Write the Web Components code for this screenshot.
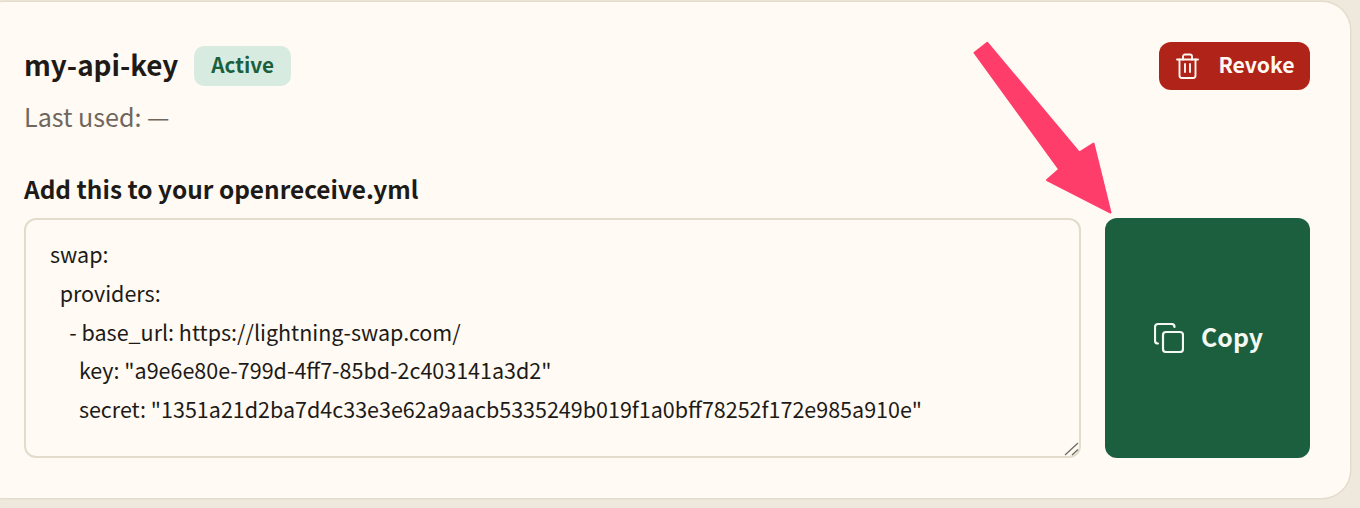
<!DOCTYPE html>
<html lang="en">
<head>
<meta charset="utf-8">
<title>API key</title>
<style>
  html, body { margin: 0; height: 100%; overflow: hidden; }
  body { background: #eee8dd; font-family: "Noto Sans CJK JP", "Noto Sans", sans-serif; }
</style>
</head>
<body>
<key-card>
  <span slot="name">my-api-key</span>
  <status-badge slot="badge">Active</status-badge>
  <span slot="meta">Last used: —</span>
  <action-button slot="revoke" kind="danger" icon="trash">Revoke</action-button>
  <span slot="label">Add this to your openreceive.yml</span>
  <config-box slot="config"></config-box>
  <action-button slot="copy" kind="primary" icon="copy">Copy</action-button>
</key-card>
<pointer-arrow></pointer-arrow>

<script>
class StatusBadge extends HTMLElement {
    connectedCallback() {
        this.attachShadow({ mode: 'open' });
        this.shadowRoot.innerHTML = `
            <style>
                :host {
                    display: inline-flex;
                    align-items: center;
                    height: 40px;
                    padding: 0 17px 4px;
                    box-sizing: border-box;
                    border-radius: 10px;
                    background: #d8ebe0;
                    color: #1c5f3e;
                    font-size: 20.7px;
                    font-weight: 700;
                }
            </style>
            <slot></slot>
        `;
    }
}
customElements.define('status-badge', StatusBadge);

const ICONS = {
    trash: `<svg width="23" height="26" viewBox="0 0 23 26" fill="none" stroke="currentColor" stroke-width="1.900" stroke-linecap="round" stroke-linejoin="round">
        <path d="M1 6.500h21"/><path d="M7 6.500V3.500a2 2 0 0 1 2-2h5a2 2 0 0 1 2 2v3"/>
        <path d="M3.500 6.500V22.500a2.500 2.500 0 0 0 2.500 2.500h11a2.500 2.500 0 0 0 2.500-2.500V6.500"/>
        <path d="M9 11v8"/><path d="M14 11v8"/></svg>`,
    copy: `<svg width="30" height="30" viewBox="0 0 30 30" fill="none" stroke="currentColor" stroke-width="2.200" stroke-linecap="round" stroke-linejoin="round">
        <rect x="9" y="9" width="20" height="20" rx="3"/>
        <path d="M4 20.500a3 3 0 0 1-3-3V4a3 3 0 0 1 3-3h13.500a3 3 0 0 1 3 3"/></svg>`
};

class ActionButton extends HTMLElement {
    connectedCallback() {
        this.attachShadow({ mode: 'open' });
        const kind = this.getAttribute('kind');
        this.shadowRoot.innerHTML = `
            <style>
                :host { display: block; }
                button {
                    display: flex;
                    align-items: center;
                    justify-content: center;
                    width: 100%;
                    height: 100%;
                    padding: 0 0 0 2px;
                    border: 0;
                    border-radius: 12px;
                    font: 700 24px/1 "Noto Sans CJK JP", "Noto Sans", sans-serif;
                    cursor: pointer;
                }
                button.danger { background: #b02318; color: #fff8f2; gap: 19px; font-size: 21.2px; }
                button.danger .text { padding-bottom: 5px; }
                button.primary { background: #1c5f3e; color: #f3f8f2; gap: 17px; font-size: 24.8px; }
                .text { display: block; padding-bottom: 3px; }
                svg { display: block; flex: none; }
            </style>
            <button class="${kind}" type="button">${ICONS[this.getAttribute('icon')]}<span class="text"><slot></slot></span></button>
        `;
    }
}
customElements.define('action-button', ActionButton);

class ConfigBox extends HTMLElement {
    connectedCallback() {
        this.attachShadow({ mode: 'open' });
        this.shadowRoot.innerHTML = `
            <style>
                :host { display: block; position: relative; min-width: 0; }
                textarea {
                    display: block;
                    width: 100%;
                    height: 100%;
                    box-sizing: border-box;
                    margin: 0;
                    padding: 15px 24px;
                    border: 2px solid #e3dccd;
                    border-radius: 12px;
                    outline: 0;
                    background: transparent;
                    color: #1d1a17;
                    font: 400 21.5px/38.75px "Noto Sans CJK JP", "Noto Sans", sans-serif;
                    white-space: pre;
                    overflow: hidden;
                    resize: none;
                }
                .grip { position: absolute; right: 1px; bottom: 1px; pointer-events: none; }
            </style>
            <textarea spellcheck="false">swap:
  providers:
    - base_url: https://lightning-swap.com/
      key: "a9e6e80e-799d-4ff7-85bd-2c403141a3d2"
      secret: "1351a21d2ba7d4c33e3e62a9aacb5335249b019f1a0bff78252f172e985a910e"</textarea>
            <svg class="grip" width="16" height="16" viewBox="0 0 16 16" fill="none" stroke="#6f6a60" stroke-width="1.300">
                <path d="M1 14L14 2"/><path d="M8 14L14 8.500"/>
            </svg>
        `;
    }
}
customElements.define('config-box', ConfigBox);

class KeyCard extends HTMLElement {
    connectedCallback() {
        this.attachShadow({ mode: 'open' });
        this.shadowRoot.innerHTML = `
            <style>
                :host {
                    display: block;
                    box-sizing: border-box;
                    width: 1374px;
                    height: 496px;
                    margin: 2px 0 0 -24px;
                    padding: 40px 40px 40px 48px;
                    border-radius: 28px;
                    background: #fffaf3;
                    box-shadow: 0 0 0 1.500px #e4dccd;
                    color: #1d1a17;
                }
                .head {
                    display: flex;
                    justify-content: space-between;
                    align-items: flex-start;
                    height: 130px;
                }
                .title { display: flex; align-items: center; gap: 16px; margin-top: 4px; height: 40px; }
                .name { font-size: 27.850px; font-weight: 700; padding-bottom: 4px; }
                .meta { margin-top: 14px; color: #6f675d; font-size: 25.100px; line-height: 32px; }
                ::slotted([slot="revoke"]) { width: 151px; height: 48px; }
                .label { padding-top: 1px; font-size: 24.400px; font-weight: 700; line-height: 32px; }
                .row {
                    display: grid;
                    grid-template-columns: 1fr 205px;
                    gap: 24px;
                    height: 240px;
                    margin-top: 13px;
                }
            </style>
            <div class="head">
                <div>
                    <div class="title">
                        <span class="name"><slot name="name"></slot></span>
                        <slot name="badge"></slot>
                    </div>
                    <div class="meta"><slot name="meta"></slot></div>
                </div>
                <slot name="revoke"></slot>
            </div>
            <div class="label"><slot name="label"></slot></div>
            <div class="row">
                <slot name="config"></slot>
                <slot name="copy"></slot>
            </div>
        `;
    }
}
customElements.define('key-card', KeyCard);

class PointerArrow extends HTMLElement {
    connectedCallback() {
        this.attachShadow({ mode: 'open' });
        this.shadowRoot.innerHTML = `
            <style>
                :host { position: absolute; left: 960px; top: 0; width: 200px; height: 240px; pointer-events: none; }
                svg { display: block; }
            </style>
            <svg width="200" height="240" viewBox="960 0 200 240">
                <polygon points="974.500,52.700 987.300,42.800 1079.300,152.700 1093.500,143.500 1110.500,212.500 1047,180 1059.300,169.300"
                    fill="#ff3d6b" stroke="#ff3d6b" stroke-width="2" stroke-linejoin="round"/>
            </svg>
        `;
    }
}
customElements.define('pointer-arrow', PointerArrow);
</script>
</body>
</html>
